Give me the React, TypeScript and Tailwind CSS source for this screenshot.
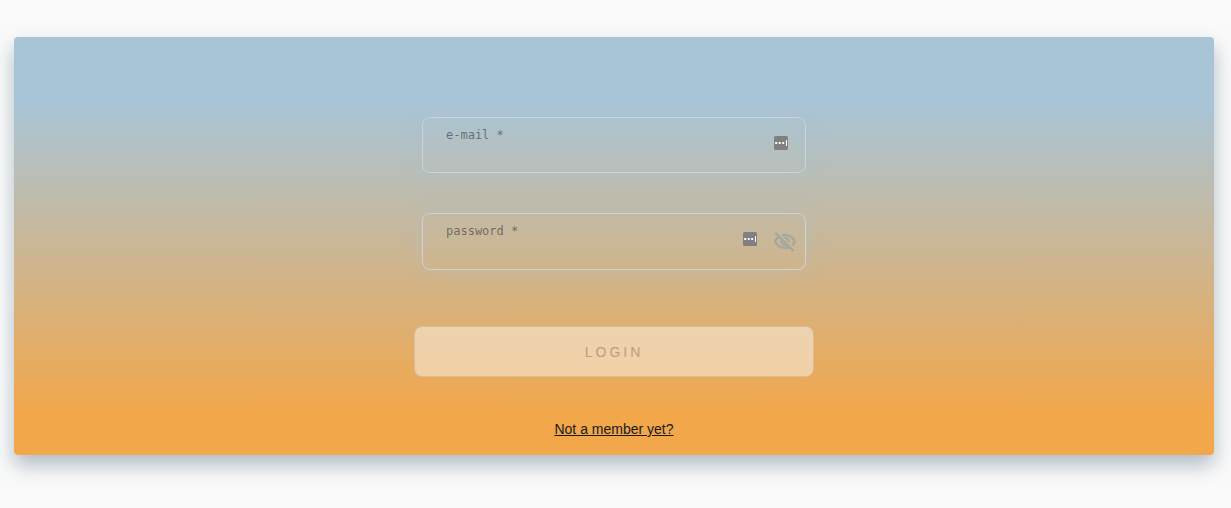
import { useState } from "react";

function PasswordManagerIcon() {
  return (
    <svg width="14" height="14" viewBox="0 0 14 14" aria-hidden="true" className="mt-[18px] shrink-0">
      <rect width="14" height="14" rx="1.5" fill="#808080" />
      <path d="M1.2 6h2v2h-2zM4.7 6h2v2h-2zM8.2 6h2v2h-2zM12 4h1v6h-1z" fill="#fff" />
    </svg>
  );
}

function VisibilityOffIcon() {
  return (
    <svg width="24" height="24" viewBox="0 0 24 24" fill="currentColor" stroke="currentColor" strokeWidth="0.4" aria-hidden="true">
      <path d="M12 6c3.79 0 7.17 2.13 8.82 5.5-.59 1.22-1.42 2.27-2.41 3.12l1.41 1.41c1.39-1.23 2.49-2.77 3.18-4.53C21.27 7.11 17 4 12 4c-1.27 0-2.49.2-3.64.57l1.65 1.65C10.66 6.09 11.32 6 12 6zm-1.07 1.14L13 9.21c.57.25 1.03.71 1.28 1.28l2.07 2.07c.08-.34.14-.7.14-1.07C16.5 9.01 14.48 7 12 7c-.37 0-.72.05-1.07.14zM2.01 3.87l2.68 2.68C3.06 7.83 1.77 9.53 1 11.5 2.73 15.89 7 19 12 19c1.52 0 2.98-.29 4.32-.82l3.42 3.42 1.41-1.41L3.42 2.45 2.01 3.87zm7.5 7.5l2.61 2.61c-.04.01-.08.02-.12.02-1.38 0-2.5-1.12-2.5-2.5 0-.05.01-.08.01-.13zm-3.4-3.4l1.75 1.75c-.23.55-.36 1.15-.36 1.78 0 2.48 2.02 4.5 4.5 4.5.63 0 1.23-.13 1.77-.36l.98.98c-.88.24-1.8.38-2.75.38-3.79 0-7.17-2.13-8.82-5.5.7-1.43 1.72-2.61 2.93-3.53z" />
    </svg>
  );
}

const fieldClass =
  "flex w-full max-w-96 items-start rounded-lg border border-[#ccd3d9] shadow-[0_0_20px_rgba(168,197,218,0.3)]";
const labelClass =
  "block font-['DejaVu_Sans_Mono',monospace] text-xs leading-4 text-black/45";
const inputClass = "block h-6 w-full bg-transparent text-sm text-black/80 outline-none";

export default function App() {
  const [email, setEmail] = useState("");
  const [password, setPassword] = useState("");
  const [visible, setVisible] = useState(false);

  return (
    <main className="min-h-screen bg-[#fafafa] pt-[37px] pr-[17px] pb-[53px] pl-[14px] font-['Liberation_Sans',Arial,sans-serif]">
      <form
        onSubmit={(event) => event.preventDefault()}
        className="mx-auto flex max-w-[1200px] flex-col items-center rounded bg-linear-to-b/srgb from-[#a8c5d8] from-15% to-[#f2a74b] to-90% px-4 pt-20 pb-4 shadow-[0_10px_20px_rgba(100,125,145,0.5)]"
      >
        <div className={`${fieldClass} h-14 pr-[17px] pl-[23px]`}>
          <div className="min-w-0 grow pt-[9px]">
            <label htmlFor="email" className={labelClass}>e-mail *</label>
            <input id="email" type="email" required value={email} onChange={(e) => setEmail(e.target.value)} className={inputClass} />
          </div>
          <PasswordManagerIcon />
        </div>
        <div className={`${fieldClass} mt-10 h-[57px] pr-2 pl-[23px]`}>
          <div className="min-w-0 grow pt-[9px]">
            <label htmlFor="password" className={labelClass}>password *</label>
            <input id="password" type={visible ? "text" : "password"} required value={password} onChange={(e) => setPassword(e.target.value)} className={inputClass} />
          </div>
          <PasswordManagerIcon />
          <button type="button" aria-label="Toggle password visibility" onClick={() => setVisible(!visible)} className="mt-4 ml-4 text-[#a3a79d]">
            <VisibilityOffIcon />
          </button>
        </div>
        <button
          type="submit"
          disabled={!email || !password}
          className="mt-14 h-[51px] w-full max-w-[400px] rounded-lg border border-[#d9bb95] bg-[#fcf6ee]/50 text-sm tracking-[3px] text-[#b99f80]"
        >
          LOGIN
        </button>
        <a href="#register" className="mt-[42px] text-sm leading-5 text-[#1a1a1a] underline">Not a member yet?</a>
      </form>
    </main>
  );
}
